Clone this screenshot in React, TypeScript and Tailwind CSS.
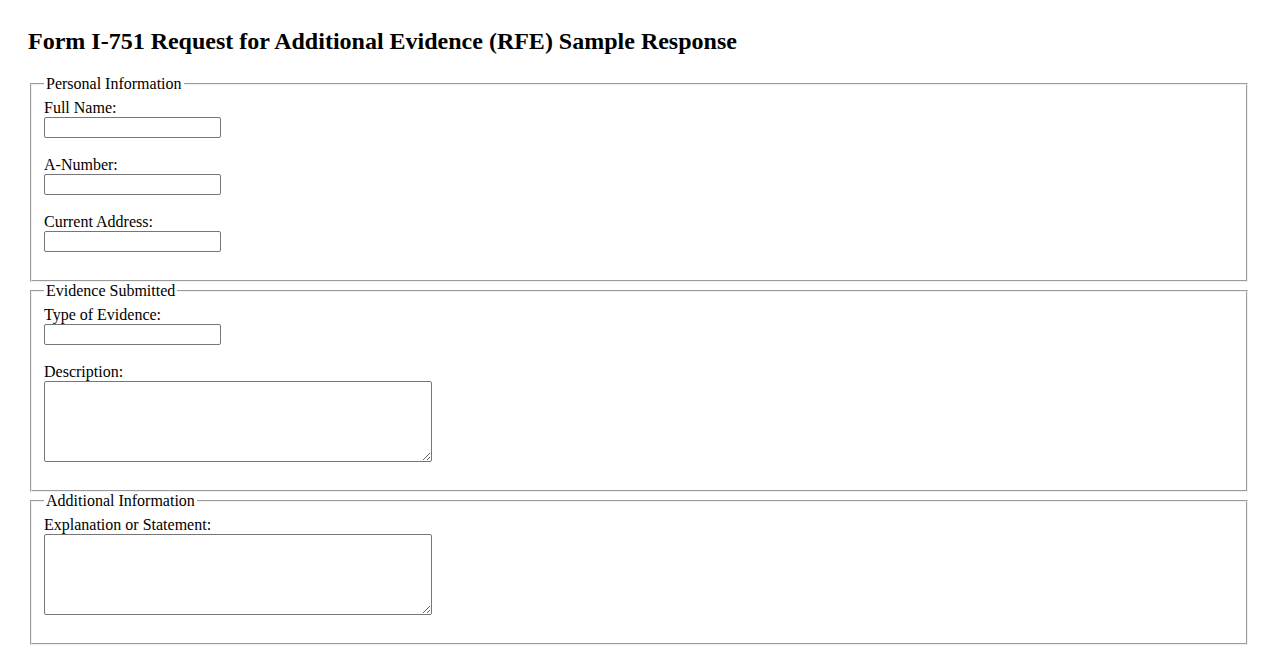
import React from "react";

type Field = { label: string; kind: "input" | "textarea" };

const sections: { legend: string; fields: Field[] }[] = [
  {
    legend: "Personal Information",
    fields: [
      { label: "Full Name:", kind: "input" },
      { label: "A-Number:", kind: "input" },
      { label: "Current Address:", kind: "input" },
    ],
  },
  {
    legend: "Evidence Submitted",
    fields: [
      { label: "Type of Evidence:", kind: "input" },
      { label: "Description:", kind: "textarea" },
    ],
  },
  {
    legend: "Additional Information",
    fields: [{ label: "Explanation or Statement:", kind: "textarea" }],
  },
];

export default function App() {
  return (
    <div className="min-h-[650px] bg-white px-[28px] pt-[28px] text-[16px] leading-[normal] text-black font-['Liberation_Serif','Times_New_Roman',serif]">
      <h2 className="mb-[20px] text-[24px] font-bold leading-[normal]">
        Form I-751 Request for Additional Evidence (RFE) Sample Response
      </h2>

      {sections.map((section) => (
        <fieldset
          key={section.legend}
          className="mx-[2px] border-2 border-[#f0f0f0] px-[12px] pt-[5.6px] pb-[10px] [border-style:groove]"
        >
          <legend className="px-[2px] leading-[normal]">{section.legend}</legend>
          <div className="flex flex-col gap-[18px] pb-[18.4px]">
            {section.fields.map((field) => (
              <div key={field.label}>
                <label className="block leading-[normal]">{field.label}</label>
                {field.kind === "input" ? (
                  <input
                    type="text"
                    className="block h-[21px] w-[177px] rounded-[2px] border border-[#767676] bg-white px-[2px] py-[1px] text-[13.33px] font-['Liberation_Sans',Arial,sans-serif] outline-none"
                  />
                ) : (
                  <textarea className="block h-[81px] w-[388px] rounded-[2px] border border-[#767676] bg-white px-[2px] py-[2px] text-[13.33px] font-['Liberation_Mono',monospace] outline-none" />
                )}
              </div>
            ))}
          </div>
        </fieldset>
      ))}
    </div>
  );
}
